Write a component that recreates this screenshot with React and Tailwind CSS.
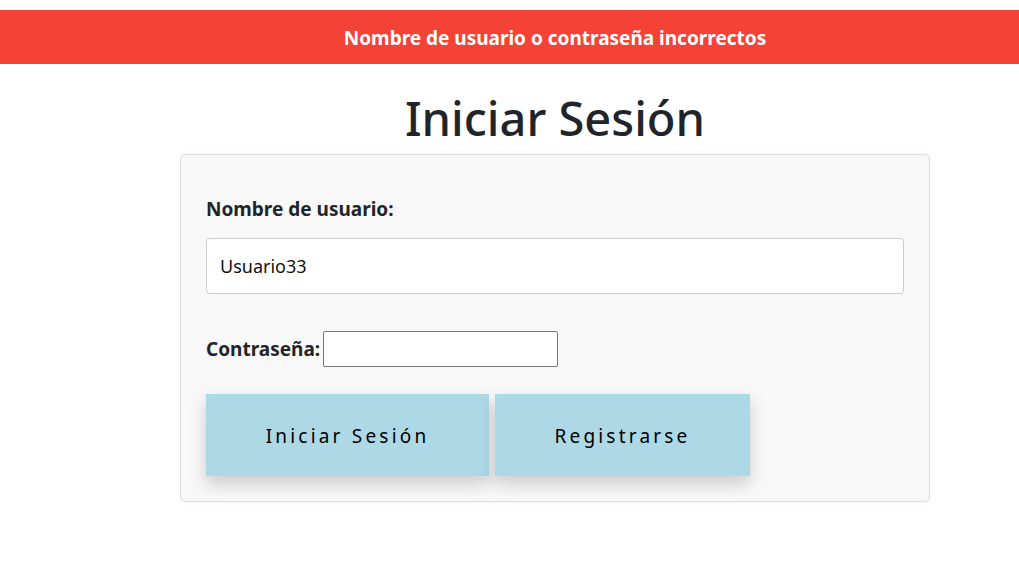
import React, { useState } from "react";

export default function App() {
  const [user, setUser] = useState("Usuario33");
  const [pass, setPass] = useState("");

  return (
    <div className="min-h-[566px] bg-white text-[#212529] font-['Noto_Sans',sans-serif]">
      <div className="mt-[10px] h-[54px] bg-[#f44336] flex items-center pl-[91px]">
        <p className="flex-1 text-center text-white font-bold text-[19px] leading-[26px] pt-[2px]">
          Nombre de usuario o contraseña incorrectos
        </p>
      </div>

      <div className="pl-[91px]">
        <h1 className="text-center text-[47px] font-medium leading-[56px] mt-[26px] mb-[8px]">
          Iniciar Sesión
        </h1>

        <div className="mx-auto w-[750px] bg-[#f8f8f8] border border-[#dddddd] rounded-[5px] shadow-[0_0_6px_rgba(0,0,0,0.06)] px-[25px] pt-[41px] pb-[25px]">
          <label className="block font-bold text-[19px] leading-[26px]">
            Nombre de usuario:
          </label>
          <input
            value={user}
            onChange={(e) => setUser(e.target.value)}
            className="mt-[16px] block w-full h-[56px] bg-white border border-[#cccccc] rounded-[4px] px-[13px] text-[18px] text-[#111] outline-none"
          />

          <div className="mt-[37px] flex items-center gap-[3px]">
            <label className="font-bold text-[19px] leading-[26px]">Contraseña:</label>
            <input
              type="password"
              value={pass}
              onChange={(e) => setPass(e.target.value)}
              className="w-[235px] h-[36px] bg-white border border-[#767676] rounded-[2px] px-2 outline-none"
            />
          </div>

          <div className="mt-[27px] flex gap-[6px]">
            <button className="w-[283px] h-[82px] pt-[3px] bg-[#add8e6] text-black text-[19px] tracking-[3.2px] shadow-[0_8px_16px_rgba(0,0,0,0.18)]">
              Iniciar Sesión
            </button>
            <button className="w-[255px] h-[82px] pt-[3px] bg-[#add8e6] text-black text-[19px] tracking-[3.2px] shadow-[0_8px_16px_rgba(0,0,0,0.18)]">
              Registrarse
            </button>
          </div>
        </div>
      </div>
    </div>
  );
}
